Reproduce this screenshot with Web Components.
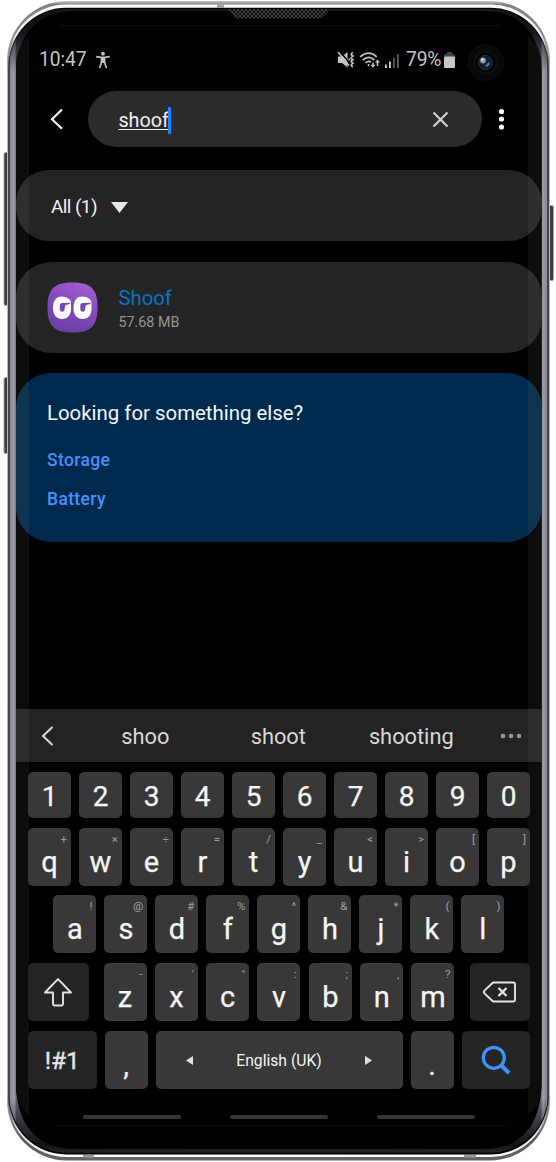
<!DOCTYPE html>
<html lang="en">
<head>
<meta charset="utf-8">
<title>Phone search</title>
<style>
html,body{margin:0;padding:0;background:#fff}
body{width:556px;height:1162px;overflow:hidden;font-family:Roboto,"Liberation Sans",sans-serif}
</style>
</head>
<body>
<phone-device>
  <status-bar></status-bar>
  <search-row></search-row>
  <list-card kind="filter"><filter-label>All (1)</filter-label></list-card>
  <list-card kind="app"><app-item name="Shoof" size="57.68 MB"></app-item></list-card>
  <list-card kind="help"><help-links></help-links></list-card>
  <soft-keyboard slot="bottom"></soft-keyboard>
</phone-device>
<script>
const define = (name, html) => customElements.define(name, class extends HTMLElement {
  connectedCallback() {
    if (this.shadowRoot) return;
    this.attachShadow({mode: 'open'}).innerHTML = typeof html === 'function' ? html(this) : html;
  }
});

define('phone-shell', `
<style>:host{display:block;width:556px;height:1162px}svg{display:block}</style>
<svg width="556" height="1162" viewBox="0 0 556 1162">
  <defs>
    <linearGradient id="rim" gradientUnits="userSpaceOnUse" x1="0" y1="0" x2="0" y2="1162">
      <stop offset="0" stop-color="#d5d8d4"/><stop offset=".004" stop-color="#7f837f"/><stop offset=".03" stop-color="#8b8e8c"/>
      <stop offset=".07" stop-color="#b9b9bb"/><stop offset=".94" stop-color="#b5b5b8"/><stop offset=".98" stop-color="#555"/><stop offset="1" stop-color="#666"/>
    </linearGradient>
    <linearGradient id="shine" gradientUnits="userSpaceOnUse" x1="0" y1="0" x2="0" y2="1162">
      <stop offset="0" stop-color="#fff"/><stop offset=".03" stop-color="#eee"/><stop offset=".06" stop-color="#26262a"/>
      <stop offset=".945" stop-color="#26262a"/><stop offset=".97" stop-color="#ddd"/><stop offset="1" stop-color="#fff"/>
    </linearGradient>
    <linearGradient id="glass" gradientUnits="userSpaceOnUse" x1="0" y1="0" x2="0" y2="1162">
      <stop offset="0" stop-color="#44444c"/><stop offset=".012" stop-color="#15151a"/><stop offset=".028" stop-color="#1d1c24"/><stop offset=".062" stop-color="#8d8b99"/>
      <stop offset=".945" stop-color="#8d8b99"/><stop offset=".968" stop-color="#45434e"/><stop offset=".985" stop-color="#18181c"/><stop offset="1" stop-color="#555560"/>
    </linearGradient>
    <linearGradient id="side" x1="0" x2="1" y1="0" y2="0">
      <stop offset="0" stop-color="#000" stop-opacity=".45"/><stop offset=".0045" stop-color="#fff" stop-opacity=".06"/><stop offset=".0085" stop-color="#fff" stop-opacity=".13"/><stop offset=".013" stop-color="#000" stop-opacity=".3"/>
      <stop offset=".987" stop-color="#000" stop-opacity=".25"/><stop offset=".992" stop-color="#fff" stop-opacity=".15"/><stop offset=".996" stop-color="#fff" stop-opacity="0"/><stop offset="1" stop-color="#000" stop-opacity=".6"/>
    </linearGradient>
    <pattern id="mesh" width="4" height="4" patternUnits="userSpaceOnUse"><rect width="4" height="4" fill="#101010"/><path d="M0 0l4 4M4 0l-4 4" stroke="#4a4a4a" stroke-width=".8"/></pattern>
    <radialGradient id="lens"><stop offset="0" stop-color="#0b1d2a"/><stop offset=".5" stop-color="#12202e"/><stop offset=".8" stop-color="#1a1f2b"/><stop offset="1" stop-color="#08080a"/></radialGradient>
    <clipPath id="scr"><rect x="16" y="26" width="525.5" height="1099" rx="38"/></clipPath>
  </defs>
  <g fill="#3b3b40" stroke="#a5a5a8" stroke-width="1">
    <rect x="4" y="152.5" width="5" height="153" rx="1.5"/><rect x="4" y="377.5" width="5" height="76" rx="1.5"/><rect x="548.5" y="205.500" width="5" height="75" rx="1.5"/>
  </g>
  <rect x="7" y="1" width="543" height="1159.500" rx="60" fill="url(#rim)"/>
  <rect x="8.200" y="4.500" width="540.6" height="1152.500" rx="58" fill="url(#shine)"/>
  <path d="M217 3.500h7v4h-7z" fill="#a0a29f"/><path d="M83 1154.500h11v3h-11zM464 1154.500h12v3h-12z" fill="#999"/>
  <rect x="9" y="7.800" width="539" height="1146.600" rx="57" fill="#000"/>
  <rect x="9.300" y="9" width="538.400" height="1143.500" rx="57" fill="url(#glass)"/>
  <rect x="9.300" y="9" width="538.400" height="1143.500" rx="57" fill="url(#side)"/>
  <path d="M16 75C16 38 34 11 76 11H482C524 11 541.500 38 541.500 75V1082C541.500 1122 524 1149 482 1149H76C34 1149 16 1122 16 1082Z" fill="#000"/>
  <path d="M228 9H330L323 17Q322 18.500 319 18.500H239Q236 18.500 235 17Z" fill="url(#mesh)"/>
  <g clip-path="url(#scr)" fill="#0d0d0d"><path d="M16 26h13v1110H16zM528 26h14v1110h-14z"/></g>
  <path d="M60 25.500H500M55 1125.500H505" stroke="#081215" stroke-width="1"/>
  <circle cx="486" cy="62.500" r="17.800" fill="#08080b" stroke="#080d1c" stroke-width="1"/>
  <circle cx="485.500" cy="62.500" r="11" fill="#030304" stroke="#121216" stroke-width="1.500"/>
  <circle cx="485.500" cy="62.500" r="7" fill="url(#lens)" stroke="#33363c"/>
  <ellipse cx="483" cy="60.500" rx="2.800" ry="3" fill="#7fa3a8"/><ellipse cx="482.500" cy="59.500" rx="1.300" ry="1.600" fill="#c9ddd2"/><path d="M489 62.500Q488.500 65.500 485.500 66" stroke="#4a74bb" stroke-width="2" fill="none"/>
</svg>`);

define('phone-device', `
<style>
:host{display:grid;width:556px;height:1162px}
phone-shell,.screen{grid-area:1/1}
.screen{z-index:1;box-sizing:border-box;padding:40px 14.500px 0 16px;display:flex;flex-direction:column;height:1125px}
.grow{flex:1}
</style>
<phone-shell></phone-shell>
<div class="screen"><slot></slot><div class="grow"></div><slot name="bottom"></slot></div>`);

define('status-bar', `
<style>
:host{display:flex;align-items:center;height:40px;padding:0 87px 0 23px;color:#c4c4c4;font-size:19.300px;box-sizing:border-box;line-height:40px}
.sp{flex:1}svg{display:block;flex:none}
.t{width:56px;letter-spacing:-.1px}
.p{letter-spacing:-.3px;margin:0 2.500px 0 7px}
</style>
<span class="t">10:47</span>
<svg width="16" height="18" viewBox="0 0 16 18"><circle cx="8" cy="2.700" r="1.900" fill="#c4c4c4"/><path d="M1.200 5.700L6 6.300H10L14.800 5.700M6.600 6V11L4.500 17M9.400 6V11L11.500 17" fill="none" stroke="#c4c4c4" stroke-width="1.700"/><path d="M5.900 6h4.200v6H5.900z" fill="#c4c4c4"/></svg>
<span class="sp"></span>
<svg width="18" height="18" viewBox="0 0 18 18" fill="#c4c4c4"><path d="M1 5.500h4L10.500 1V16.500L5 12H1z"/><path d="M2.500 0L13 12.500" stroke="#000" stroke-width="1.500"/><path d="M1 1L12 14.500" stroke="#c4c4c4" stroke-width="1.500"/><path d="M15.800 1.500q-3 1.800 0 3.600q-3 1.800 0 3.600q-3 1.800 0 3.600q-3 1.800 0 3.600M12.300 7.500v2" stroke="#c4c4c4" stroke-width="1.800" fill="none"/></svg>
<svg width="21" height="18" viewBox="0 0 21 18" style="margin-left:4px" fill="none" stroke="#c4c4c4" stroke-width="1.700"><path d="M1.200 5.800Q9.500-1.700 17.800 5.800M3.700 9.200Q9.500 3.700 15.300 9M6.500 11.800Q9.500 9.200 12 11"/><path d="M9.500 13v2M14 11.500V15M18.500 10.500V15" stroke-width="1.500"/><path d="M11.500 13.700h5L14 16.800zM16 11.500h5L18.500 8.400z" fill="#c4c4c4" stroke="none"/></svg>
<svg width="14" height="17" viewBox="0 0 14 17" style="margin-left:5px"><path d="M0 12.500h1.800V16H0zM4 9.500h1.800V16H4z" fill="#d0d0d0"/><path d="M8 5.500h1.800V16H8zM12 2h1.800V16H12z" fill="#5d5d5d"/></svg>
<span class="p">79%</span>
<svg width="11" height="16" viewBox="0 0 11 16"><path d="M3 0h5v2h2.500v3H.3V2H3z" fill="#444"/><rect x="0" y="4.500" width="11" height="11.500" rx="1" fill="#c8c8c8"/></svg>`);

define('search-row', `
<style>
:host{display:flex;align-items:center;margin-top:11px;height:56px;flex:none}
svg{display:block;flex:none}
.back{margin-left:33.500px}
.field{box-sizing:border-box;width:394.500px;height:56px;margin-left:24px;border-radius:28px;background:#2b2b2b;display:flex;align-items:center;padding:2px 33px 0 30.900px;color:#f0f0f0;font-size:19.800px;line-height:27px}
.q{text-decoration:underline;text-decoration-thickness:1px;text-underline-offset:1.500px}
.caret{width:3px;height:27px;background:#1984ff;margin-left:-1px;flex:none}
.sp{flex:1}.more{margin-left:15.500px}
</style>
<svg class="back" width="14" height="22" viewBox="0 0 14 22"><path d="M12 1.500L2 11.200l10 9.500" fill="none" stroke="#f5f5f5" stroke-width="2.200"/></svg>
<div class="field"><span class="q">shoof</span><span class="caret"></span><span class="sp"></span>
<svg width="17" height="17" viewBox="0 0 17 17" style="margin-top:-2px"><path d="M1.500 1.500l14 14M15.500 1.500l-14 14" stroke="#d0d0d0" stroke-width="2.200"/></svg></div>
<svg class="more" width="7" height="22" viewBox="0 0 7 22" fill="#fafafa"><circle cx="3.500" cy="3.500" r="2.600"/><circle cx="3.500" cy="11" r="2.600"/><circle cx="3.500" cy="19" r="2.600"/></svg>`);

define('list-card', `
<style>
:host{display:block;flex:none;box-sizing:border-box;background:linear-gradient(90deg,#2e2e2e 13px,#242424 13px,#242424 512px,#2e2e2e 512px);border-radius:35px;margin-top:20.500px}
:host([kind=filter]){height:71px;margin-top:23px;border-radius:33px}
:host([kind=app]){height:91px}
:host([kind=help]){height:169px;background:linear-gradient(90deg,#0f3452 13px,#002a4d 13px,#002a4d 512px,#0f3452 512px)}
</style><slot></slot>`);

define('filter-label', `
<style>:host{display:flex;align-items:center;height:71px;padding:2px 0 0 35px;box-sizing:border-box;color:#f2f2f2;font-size:19px;letter-spacing:-.6px}svg{margin-left:14px;margin-top:1px}</style>
<slot></slot><svg width="17" height="11" viewBox="0 0 17 11"><path d="M0 0h17L8.500 11z" fill="#e6e6e6"/></svg>`);

define('app-item', el => {
  const eye = '<path d="M14.500 14.500C20.500 14.500 24 17.500 24 21V27C24 33 20.500 37 15 37S6 33 6 26C6 19 9 14.500 14.500 14.500Z" fill="#fff"/><path d="M12.800 23Q13 21.300 15 21L24 20.800Q22 23 19 22.700Q17.700 23.500 17.700 26.500Q17.500 29.800 15.200 29.800Q12.600 29.800 12.800 26Z" fill="#7945b3"/>';
  return `
<style>
:host{display:flex;align-items:center;height:91px;padding-left:31px;box-sizing:border-box}
svg{display:block}.x{margin-left:20.500px;padding-top:6px}
.n{color:#0b74c4;font-size:20.300px;line-height:24px}.s{color:#959595;font-size:14.300px;line-height:24px}
</style>
<svg width="51" height="51" viewBox="0 0 51 51">
 <defs><linearGradient id="g" x1=".7" y1="0" x2=".3" y2="1"><stop offset="0" stop-color="#a45bd2"/><stop offset=".5" stop-color="#8149bb"/><stop offset="1" stop-color="#6741a5"/></linearGradient></defs>
 <path d="M25.500 .5C44 .5 50.500 7 50.500 25.500S44 50.500 25.500 50.500 .5 44 .5 25.500 7 .5 25.500 .5Z" fill="url(#g)"/>
 <g>${eye}</g><g transform="translate(20.500 0)">${eye}</g>
</svg>
<div class="x"><div class="n">${el.getAttribute('name')}</div><div class="s">${el.getAttribute('size')}</div></div>`;
});

define('help-links', `
<style>
:host{display:flex;flex-direction:column;padding:25.500px 0 0 31px}
.h{color:#f4f7fa;font-size:20.400px;line-height:28px}
.l{color:#4a90fb;font-size:17.500px;letter-spacing:.35px;font-weight:500;line-height:24px;margin-top:21.500px}.l+.l{margin-top:15px}
</style>
<div class="h">Looking for something else?</div><div class="l">Storage</div><div class="l">Battery</div>`);

define('key-cap', el => `
<style>
:host{display:flex;position:relative;box-sizing:border-box;align-items:center;justify-content:center;width:43px;height:100%;flex:none;border-radius:5px;background:#383838;color:#f5f5f5;font-size:29px;line-height:34px;padding-top:10px;-webkit-text-stroke:.25px #f5f5f5}
:host([num]){padding-top:4px;font-size:28px}
:host([fn]){background:#252525;padding-top:0}
:host([sym]){font-size:24.500px;-webkit-text-stroke:.4px #e4e4e4;padding-top:3px;color:#e4e4e4}
:host(.space){-webkit-text-stroke:0}
.hint{position:absolute;right:4px;top:5px;font-size:11.500px;line-height:13px;color:#a0a0a0;-webkit-text-stroke:0}
</style><slot></slot>${el.getAttribute('hint') ? `<span class="hint">${el.getAttribute('hint').replace('<', '&lt;')}</span>` : ''}`);

const keys = (letters, hints) => [...letters].map((c, i) => `<key-cap ${hints ? `hint='${hints[i] === "'" ? '&#39;' : hints[i]}'` : 'num'}>${c}</key-cap>`).join('');

define('soft-keyboard', `
<style>
:host{display:flex;flex-direction:column;height:416px;flex:none}
svg{display:block;flex:none}
.sug{height:53px;flex:none;display:grid;grid-template-columns:62.800px 133px 133px 133px 1fr;align-items:center;background:linear-gradient(90deg,#2d2d2d 13px,#232323 13px,#232323 512px,#2d2d2d 512px);font-size:21.800px;color:#d8d8d8;text-align:center;padding-top:1px;box-sizing:border-box}
.row{display:flex;justify-content:space-between;height:58px;flex:none;padding:0 11.500px 0 12px;margin-top:9.700px}
.r1{height:46px;margin-top:10px}.r3{padding:0 37px 0 37.400px}
.mid{display:flex;width:351px;justify-content:space-between}
.space{width:247px;font-size:15.700px;padding:2px 0 0;gap:43px}
.nav{display:flex;gap:49px;margin:26px 0 0 66.500px}.nav i{width:98.300px;height:4.500px;border-radius:2.500px;background:#353535}
</style>
<div class="sug">
 <svg width="13" height="20" viewBox="0 0 13 20" style="margin-left:25px"><path d="M11.500 1L2 10l9.500 9" fill="none" stroke="#dcdcdc" stroke-width="2"/></svg>
 <span>shoo</span><span>shoot</span><span>shooting</span>
 <svg width="22" height="6" viewBox="0 0 22 6" style="margin-left:22px" fill="#969696"><circle cx="3" cy="3" r="2.300"/><circle cx="11" cy="3" r="2.300"/><circle cx="19" cy="3" r="2.300"/></svg>
</div>
<div class="row r1">${keys('1234567890')}</div>
<div class="row">${keys('qwertyuiop', '+×÷=/_<>[]')}</div>
<div class="row r3">${keys('asdfghjkl', '!@#%^&*()')}</div>
<div class="row">
 <key-cap fn style="width:60.500px"><svg width="28" height="29" viewBox="0 0 28 29"><path d="M14 1.200L27 14.500H19V26Q19 27.500 17.500 27.500H10.500Q9 27.500 9 26V14.500H1Z" fill="none" stroke="#e4e4e4" stroke-width="1.900" stroke-linejoin="round"/></svg></key-cap>
 <div class="mid">${keys('zxcvbnm', "-'\":;,?")}</div>
 <key-cap fn style="width:60.500px"><svg width="33" height="22" viewBox="0 0 33 22" fill="none" stroke="#e4e4e4" stroke-width="1.900"><path d="M11 1.500H30.500Q32 1.500 32 3V19Q32 20.500 30.500 20.500H11Q10 20.500 9 19.500L1.500 12.500Q.5 11 1.500 9.500L9 2.500Q10 1.500 11 1.500Z"/><path d="M15.500 7l8 8M23.500 7l-8 8" stroke-width="2.400"/></svg></key-cap>
</div>
<div class="row">
 <key-cap fn sym style="width:68.500px">!#1</key-cap><key-cap>,</key-cap>
 <key-cap class="space"><svg width="7" height="9" viewBox="0 0 7 9"><path d="M7 0v9L0 4.500z" fill="#e0e0e0"/></svg>English (UK)<svg width="7" height="9" viewBox="0 0 7 9"><path d="M0 0v9l7-4.500z" fill="#e0e0e0"/></svg></key-cap>
 <key-cap>.</key-cap>
 <key-cap fn style="width:68.500px"><svg width="30" height="30" viewBox="0 0 30 30" fill="none" stroke="#3f94fb"><circle cx="12.800" cy="12.800" r="10.500" stroke-width="3.200"/><path d="M20 20l8 8" stroke-width="4"/></svg></key-cap>
</div>
<div class="nav"><i></i><i></i><i></i></div>`);
</script>
</body>
</html>
